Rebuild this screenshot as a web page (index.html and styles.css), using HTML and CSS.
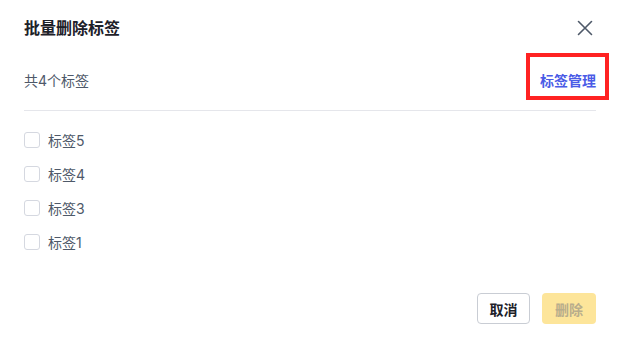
FILE: index.html
```html
<!DOCTYPE html>
<html lang="zh">
<head>
<meta charset="utf-8">
<link rel="stylesheet" href="styles.css">
</head>
<body>
<div class="modal">
  <div class="header">
    <div class="title">批量删除标签</div>
    <button class="close" aria-label="关闭">
      <svg width="16" height="16" viewBox="0 0 16 16"><path d="M1.5 1.5L14.5 14.5M14.5 1.5L1.5 14.5" stroke="#4e5969" stroke-width="1.6" fill="none" stroke-linecap="round"/></svg>
    </button>
  </div>
  <div class="summary">
    <span class="count">共4个标签</span>
    <span class="manage-wrap"><a class="manage">标签管理</a></span>
  </div>
  <div class="divider"></div>
  <ul class="list">
    <li class="item"><span class="box"></span><span class="label">标签5</span></li>
    <li class="item"><span class="box"></span><span class="label">标签4</span></li>
    <li class="item"><span class="box"></span><span class="label">标签3</span></li>
    <li class="item"><span class="box"></span><span class="label">标签1</span></li>
  </ul>
  <div class="footer">
    <button class="btn cancel">取消</button>
    <button class="btn delete">删除</button>
  </div>
</div>
</body>
</html>
```

FILE: styles.css
```css
html, body {
  margin: 0;
  padding: 0;
  background: #ffffff;
}
body {
  font-family: "Inter", "Noto Sans CJK SC", "Noto Sans", sans-serif;
  color: #1d2129;
}
.modal {
  width: 619px;
  height: 340px;
  box-sizing: border-box;
  padding: 0 23px 0 24px;
  display: flex;
  flex-direction: column;
  background: #fff;
}
.header {
  height: 56px;
  display: flex;
  align-items: center;
  justify-content: space-between;
}
.title {
  font-size: 16px;
  font-weight: 700;
  color: #1d2129;
  line-height: 22px;
}
.close {
  border: 0;
  background: none;
  padding: 0;
  margin-right: 3px;
  width: 16px;
  height: 16px;
  display: flex;
  cursor: pointer;
}
.summary {
  height: 48px;
  display: flex;
  align-items: center;
  justify-content: space-between;
}
.count {
  font-size: 14px;
  color: #4e5969;
}
.manage-wrap {
  margin: -7px -13px 0 0;
  border: 4px solid #ff2222;
  box-sizing: border-box;
  height: 47px;
  width: 83px;
  padding: 14px 0 0 10px;
  display: flex;
  align-items: flex-start;
}
.manage {
  font-size: 14px;
  line-height: 20px;
  font-weight: 600;
  color: #4a5be6;
  white-space: nowrap;
  cursor: pointer;
}
.divider {
  margin-top: 6px;
  height: 1px;
  background: #e5e6eb;
}
.list {
  list-style: none;
  margin: 21px 0 0;
  padding: 0;
  display: flex;
  flex-direction: column;
  gap: 18px;
}
.item {
  display: flex;
  align-items: center;
  height: 16px;
}
.box {
  width: 14px;
  height: 14px;
  border: 1px solid #d5d8e0;
  border-radius: 3px;
  margin-right: 8px;
  background: #fff;
}
.label {
  font-size: 14px;
  color: #4e5969;
}
.footer {
  margin-top: auto;
  margin-bottom: 16px;
  display: flex;
  justify-content: flex-end;
  gap: 12px;
}
.btn {
  height: 31px;
  padding: 0;
  font-family: inherit;
  font-size: 14px;
  font-weight: 600;
  border-radius: 4px;
  box-sizing: border-box;
  white-space: nowrap;
}
.cancel {
  width: 53px;
  border: 1px solid #c9cdd4;
  background: #fff;
  color: #1d2129;
}
.delete {
  width: 54px;
  border: 0;
  background: #fde59a;
  color: #b8ad8c;
}
```
